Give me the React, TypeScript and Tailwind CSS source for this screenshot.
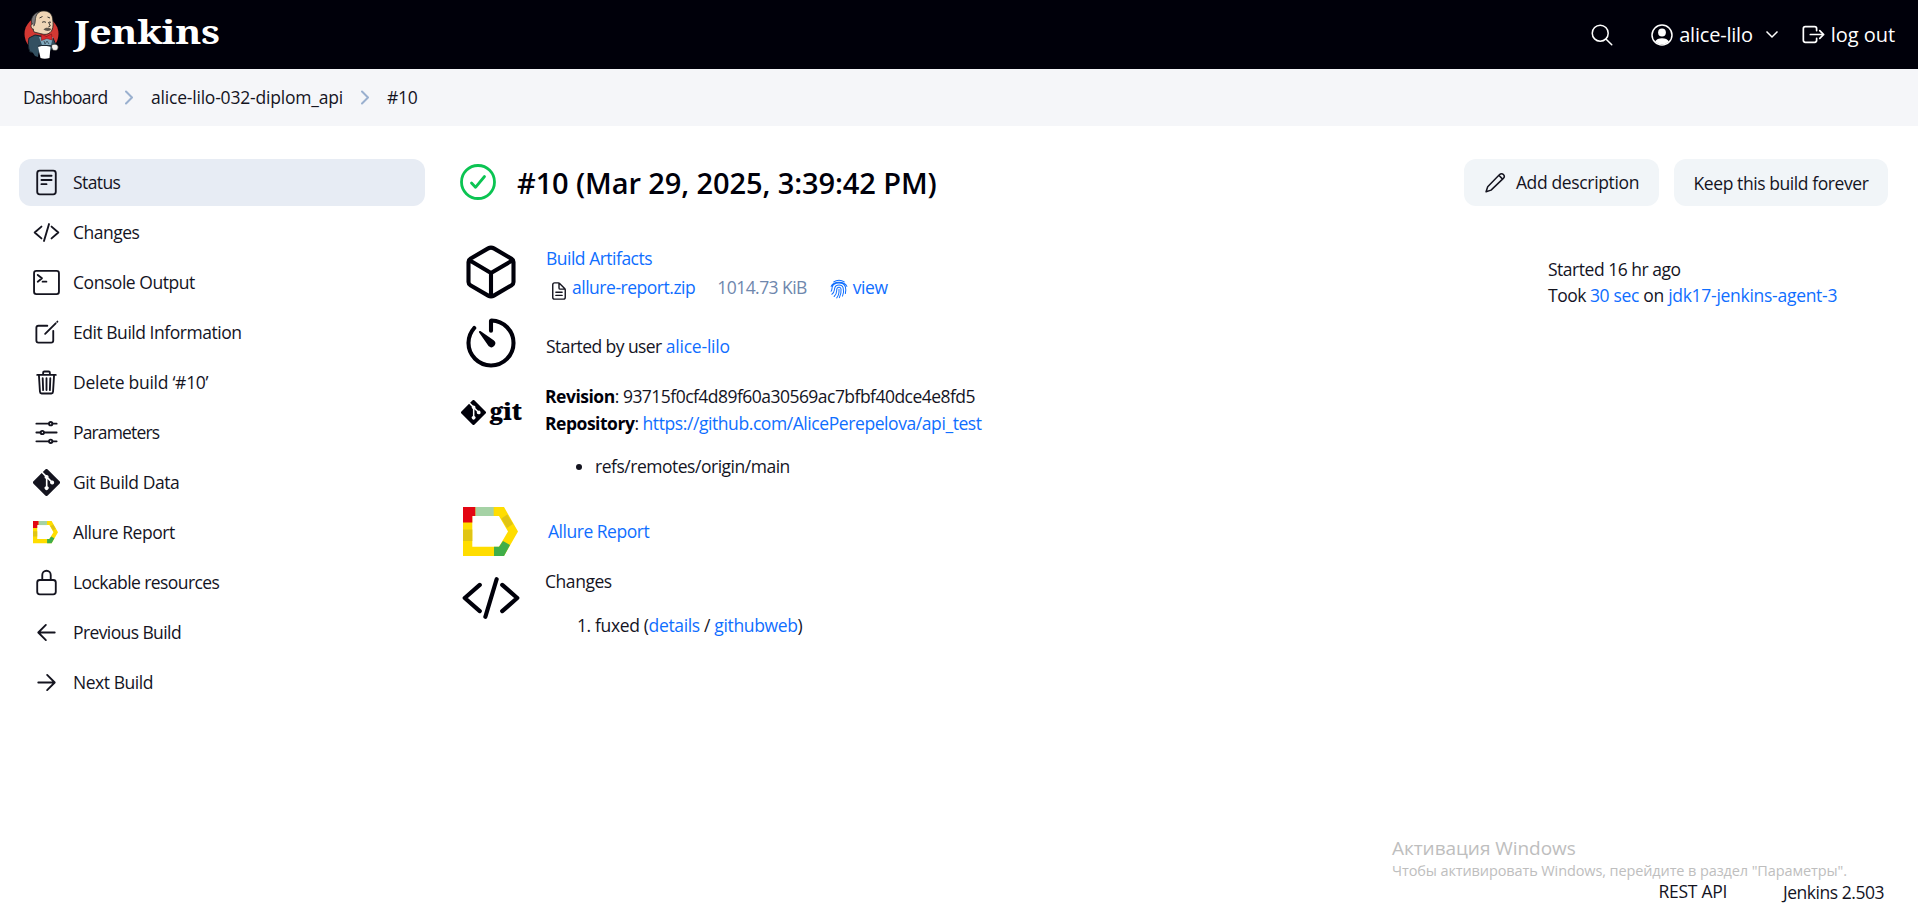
import React, { ReactNode } from "react";

function Svg({ size = 28, children, className = "", w = 35 }: { size?: number; children: ReactNode; className?: string; w?: number }) {
  return (
    <svg width={size} height={size} viewBox="0 0 512 512" fill="none" stroke="currentColor" strokeWidth={w} strokeLinecap="round" strokeLinejoin="round" className={"shrink-0 " + className}>
      {children}
    </svg>
  );
}

const Code = ({ size = 27 }: { size?: number }) => (
  <Svg size={size} w={36}><path d="M160 368L32 256l128-112M352 368l128-112-128-112M304 96l-96 320" /></Svg>
);

const gitPath = "M502.6 233.7L278.4 9.4a31.7 31.7 0 00-44.9 0l-46.5 46.6 59 59a37.7 37.7 0 0147.7 48l56.9 56.9a37.7 37.7 0 11-22.6 21.3l-53-53v139.5a37.7 37.7 0 11-31-1.1V185.800a37.7 37.7 0 01-20.500-49.500l-58.200-58.200L9.4 233.600a31.700 31.700 0 000 44.900l224.200 224.100a31.700 31.700 0 0044.900 0l224.100-224.100a31.700 31.700 0 000-44.800z";

const GitMark = ({ size = 27 }: { size?: number }) => (
  <svg width={size} height={size} viewBox="0 0 512 512" className="shrink-0"><path fill="currentColor" d={gitPath} /></svg>
);

const Allure = ({ size }: { size: number }) => (
  <svg width={size} height={(size * 49) / 55} viewBox="0 0 55 49" className="shrink-0">
    <path fill="#ffdd00" fillRule="evenodd" d="M0 0h41l14 24.500L41 49H0zM9.300 9v30.700H36L45 24.500 36 9z" />
    <path fill="#e30613" d="M0 0h12.500v9H9.300v6.600H0z" />
    <path fill="#a5d2a5" d="M12.500 0h18.200v9H12.500z" />
    <path fill="#e0c414" d="M0 22.500h9.300V34H0zM38.300 11.500L44.300 7.500 50 17l-6 4z" />
    <path fill="#3fae49" d="M31 39.700h5L40 34l7 4L41 49H31z" />
  </svg>
);

const FileIcon = () => (
  <Svg size={20} w={36}><path d="M416 221.250V416a48 48 0 01-48 48H144a48 48 0 01-48-48V96a48 48 0 0148-48h98.750a32 32 0 0122.620 9.370l141.260 141.260a32 32 0 019.370 22.620zM256 56v120a32 32 0 0032 32h120M176 288h160M176 368h160" /></Svg>
);

const Finger = () => (
  <svg width="18" height="20" viewBox="0 0 24 26" fill="none" stroke="currentColor" strokeWidth="1.350" strokeLinecap="round" className="mt-[2px] shrink-0">
    <path d="M5 3.500C9 .5 15 .5 19 3.500M1.500 9.500c3-7.500 18-7.500 21 0M1.500 16c1.500-2 1-4 1.500-6 2-6.500 15-7 17.500 0 .8 3 .8 6 0 9M2.500 20c4-2 3-6.500 4-9 1.500-4.500 9.500-4.500 11 .2 1 3.500.8 7.500-.8 11.300M5.500 23C10.500 19 8 14.500 9.500 12c1.500-2 4.800-1.500 5.200 1 .5 4-.2 7.500-2.200 11.500M9 24.800c3-3.500 3.300-7 3-11.300" />
  </svg>
);

const Butler = () => (
  <svg width="36" height="50" viewBox="0 0 36 50" className="shrink-0">
    <ellipse cx="17.500" cy="24" rx="17" ry="17.500" fill="#d33833" />
    <path d="M6 42C4 38 4 31 5 28l6-3 11 2 7 1 3 7-2 3-5 3-11 2z" fill="#335061" stroke="#16222b" strokeWidth="1" />
    <path d="M7 40l4 6 3 1 1-9-6-3z" fill="#335061" />
    <path d="M15 27l3 8 9 0 2-8z" fill="#81a8bc" />
    <path d="M20 31l1 3 2-3 2 3" fill="none" stroke="#33424c" strokeWidth=".8" />
    <path d="M10 22C8 18 8 13 9 9c2-6 7-8.500 12-8 5 .5 7.500 4 7.800 9 .4 3 .6 7-.8 10-2 4-6 5-10 4z" fill="#f0d6b7" stroke="#222" strokeWidth=".8" />
    <path d="M8.500 16C5.500 9 9 3 16 1.500c-3 2-4 4-4.500 7L11 13l-1 3z" fill="#7c7a7c" stroke="#222" strokeWidth=".7" />
    <path d="M9 14c-3-.5-2.500 5 1 5.500" fill="#f0d6b7" stroke="#222" strokeWidth=".8" />
    <path d="M15.500 8l3-1.500M23.500 7l2.500 1M18 12.500c1-1 3-1 4 0M25 12l2 .3M24.500 12l1.800 4-2 1" fill="none" stroke="#222" strokeWidth=".9" />
    <path d="M19.500 19.500c2-2.500 5-2 8-.5-1.500 2.500-5.500 2.500-8 .5z" fill="#5d554c" />
    <path d="M17 24l5.500 2.500L27.500 24l.8 6-5.500-1.500-5.300 2z" fill="#d9282c" stroke="#6d1512" strokeWidth=".5" />
    <path d="M14 36.500c4-1.300 8-.8 12.500 0L25.500 48c-3 1-6.500 1-9 0z" fill="#fff" />
    <path d="M14 36.300c5-1.500 9-1 14 0" fill="none" stroke="#16222b" strokeWidth="1" />
    <path d="M27.500 35.500c2-2 5.500-1.500 6.500.5.800 3-1 4.500-3 4.500-2.500 0-3.500-2-3.500-5z" fill="#f5f3f0" stroke="#222" strokeWidth=".7" />
  </svg>
);

const items: { label: string; icon: ReactNode; t: string }[] = [
  { label: "Status", t: "tracking-[-0.6px]", icon: <Svg size={27}><rect x="80" y="32" width="352" height="448" rx="48" /><path d="M160 128h192M160 208h192M160 288h96" /></Svg> },
  { label: "Changes", t: "tracking-[-0.5px]", icon: <Code /> },
  { label: "Console Output", t: "tracking-[-0.45px]", icon: <Svg size={27}><rect x="20" y="36" width="472" height="440" rx="44" /><path d="M90 112l80 64-80 64M182 240h72" /></Svg> },
  { label: "Edit Build Information", t: "tracking-[-0.47px]", icon: <Svg size={27}><path d="M384 224v184a40 40 0 01-40 40H104a40 40 0 01-40-40V168a40 40 0 0140-40h167.480M230 282L430 82M459 53l4-4" /></Svg> },
  { label: "Delete build ‘#10’", t: "tracking-[-0.27px]", icon: <Svg size={27}><path d="M112 112l20 320c.95 18.490 14.400 32 32 32h184c17.670 0 30.870-13.510 32-32l20-320M80 112h352M192 112V72a24 24 0 0124-24h80a24 24 0 0124 24v40M256 176v224M184 176l8 224M328 176l-8 224" /></Svg> },
  { label: "Parameters", t: "tracking-[-0.85px]", icon: <Svg size={27}><path d="M368 88h80M64 88h240M368 424h80M64 424h240M208 256h240M64 256h80" /><circle cx="336" cy="88" r="32" /><circle cx="176" cy="256" r="32" /><circle cx="336" cy="424" r="32" /></Svg> },
  { label: "Git Build Data", t: "tracking-[-0.43px]", icon: <GitMark /> },
  { label: "Allure Report", t: "tracking-[-0.43px]", icon: <Allure size={25} /> },
  { label: "Lockable resources", t: "tracking-[-0.58px]", icon: <Svg size={27}><path d="M336 208v-95a80 80 0 00-160 0v95" /><rect x="80" y="208" width="352" height="272" rx="48" /></Svg> },
  { label: "Previous Build", t: "tracking-[-0.6px]", icon: <Svg size={27}><path d="M244 400L100 256l144-144M120 256h292" /></Svg> },
  { label: "Next Build", t: "tracking-[-0.46px]", icon: <Svg size={27}><path d="M268 112l144 144-144 144M392 256H100" /></Svg> },
];

const Chevron = () => (
  <svg width="10" height="15" viewBox="0 0 10 15" fill="none" stroke="#9ab0cf" strokeWidth="2" strokeLinecap="round" strokeLinejoin="round"><path d="M1 1.500l6 6-6 6" /></svg>
);

const A = ({ children, className = "" }: { children: ReactNode; className?: string }) => (
  <a className={"text-[#0f6eff] " + className}>{children}</a>
);

export default function App() {
  return (
    <div className="relative flex h-[923px] w-[1918px] flex-col overflow-hidden bg-white font-['Open_Sans','Noto_Sans',sans-serif] text-[17.5px] tracking-[-0.3px] text-[#14141f] whitespace-nowrap">
      <header className="flex h-[69px] shrink-0 items-center bg-[#00000a] pr-[23px] pl-[24px] text-white">
        <Butler />
        <span className="mb-[5px] ml-[14px] origin-left scale-x-[1.19] font-['Noto_Serif','DejaVu_Serif','Liberation_Serif',serif] text-[33px] leading-[40px] font-bold">Jenkins</span>
        <Svg size={26} className="ml-auto" w={30}><path d="M221 64a157 157 0 10157 157A157 157 0 00221 64zM338 338l110 110" /></Svg>
        <svg width="22" height="22" viewBox="0 0 22 22" className="ml-[36px]"><circle cx="11" cy="11" r="10" fill="none" stroke="#fff" strokeWidth="1.500" /><circle cx="11" cy="8.500" r="3.900" fill="#fff" /><path d="M4 17.500c2-4.500 12-4.500 14 0a10 10 0 01-14 0z" fill="#fff" /></svg>
        <span className="ml-[6px] text-[20px] font-medium tracking-[-0.2px]">alice-lilo</span>
        <svg width="14" height="9" viewBox="0 0 14 9" fill="none" stroke="#fff" strokeWidth="1.500" className="ml-[12px]"><path d="M1.500 1.500L7 7l5.500-5.500" /></svg>
        <Svg size={25} className="ml-[22px]"><path d="M320 176v-40a40 40 0 00-40-40H88a40 40 0 00-40 40v240a40 40 0 0040 40h192a40 40 0 0040-40v-40M384 176l80 80-80 80M191 256h273" /></Svg>
        <span className="ml-[5px] text-[20px] font-medium tracking-[-0.05px]">log out</span>
      </header>

      <nav className="flex h-[57px] shrink-0 items-center bg-[#f5f6f9] pl-[23px]">
        <span className="w-[102px] tracking-[-0.65px]">Dashboard</span>
        <span className="w-[26px]"><Chevron /></span>
        <span className="w-[210px] tracking-[-0.2px]">alice-lilo-032-diplom_api</span>
        <span className="w-[26px]"><Chevron /></span>
        <span>#10</span>
      </nav>

      <div className="flex flex-1 pt-[33px] pl-[19px]">
        <aside className="flex w-[406px] flex-col gap-[3px]">
          {items.map((it, i) => (
            <div key={it.label} className={"flex h-[47px] items-center gap-[13px] rounded-[12px] pl-[14px] " + (i === 0 ? "bg-[#e7ecf4]" : "")}>
              <span className="flex w-[27px] shrink-0 items-center">{it.icon}</span>
              <span className={it.t}>{it.label}</span>
            </div>
          ))}
        </aside>

        <main className="ml-[35px] w-[1428px]">
          <div className="flex h-[47px] items-center">
            <svg width="36" height="36" viewBox="0 0 36 36" fill="none" stroke="#0bc452" strokeWidth="2.800" strokeLinecap="round" strokeLinejoin="round" className="mb-px"><circle cx="18" cy="18" r="16.500" /><path d="M11.500 19l4 4.300L24.500 12.500" /></svg>
            <h1 className="ml-[21px] text-[29px] font-semibold tracking-[-0.1px] text-[#00000a]">#10 (Mar 29, 2025, 3:39:42 PM)</h1>
            <button className="ml-auto flex h-[47px] w-[195px] items-center justify-center gap-[10px] rounded-[12px] bg-[#f1f5f8]">
              <Svg size={22}><path d="M364 58l-18 18-260 268-38 116 116-38L432 166l18-18a62 62 0 00-86-90zM346 76l86 90" /></Svg>
              <span className="tracking-[-0.35px]">Add description</span>
            </button>
            <button className="ml-[15px] h-[47px] w-[214px] rounded-[12px] bg-[#f1f5f8] pt-[2px] tracking-[-0.42px]">Keep this build forever</button>
          </div>

          <div className="flex tracking-[-0.48px]">
            <div className="flex w-[1088px] flex-col">
              <div className="mt-[36px] flex h-[70px]">
                <span className="w-[86px] pl-[1px] text-[#00000a]">
                  <Svg size={60} w={35}><path d="M448 341.370V170.610A32 32 0 00432.110 143l-152-88.460a47.940 47.940 0 00-48.240 0L79.890 143A32 32 0 0064 170.610v170.760A32 32 0 0079.890 369l152 88.460a48 48 0 0048.240 0l152-88.460A32 32 0 00448 341.370zM69 153.990l187 110 187-110M256 463.990v-200" /></Svg>
                </span>
                <div className="pt-[2px]">
                  <div className="h-[29px] leading-[29px] tracking-[-0.5px]"><A>Build Artifacts</A></div>
                  <div className="flex h-[29px] items-center leading-[29px]">
                    <span className="ml-[3px] pt-[7px]"><FileIcon /></span>
                    <A className="ml-[3px]">allure-report.zip</A>
                    <span className="ml-[22px] tracking-[-0.55px] text-[#6f87ad]">1014.73 KiB</span>
                    <A className="ml-[23px] flex items-center gap-[5px]"><Finger /><span>view</span></A>
                  </div>
                </div>
              </div>
              <div className="flex h-[71px]">
                <span className="w-[86px] pt-[1px] pl-[1px] text-[#00000a]">
                  <Svg size={60} w={35}><path d="M112.910 128A191.850 191.850 0 0064 254c-1.180 106.350 85.650 193.800 192 194 106.200.200 192-85.830 192-192 0-104.540-83.550-189.610-187.500-192a4.360 4.360 0 00-4.500 4.370V152" /><path stroke="none" fill="currentColor" d="M233.380 278.630l-79-113a8.130 8.130 0 0111.320-11.320l113 79a32.500 32.500 0 01-37.250 53.260 33.210 33.210 0 01-8.070-7.940z" /></Svg>
                </span>
                <div className="pt-[21px] leading-[26px] tracking-[-0.56px]">Started by user <A className="tracking-[-0.2px]">alice-lilo</A></div>
              </div>
              <div className="flex h-[123px]">
                <span className="flex h-[58px] w-[85px] items-center pl-[1px] text-[#00000a]">
                  <GitMark size={25} />
                  <span className="mb-[2px] ml-[4px] font-['Noto_Serif','DejaVu_Serif',serif] text-[23px] leading-[26px] font-black tracking-[-0.1px]">git</span>
                </span>
                <div className="leading-[27px]">
                  <div><b className="text-[#00000a]">Revision</b>: <span className="tracking-[-0.53px]">93715f0cf4d89f60a30569ac7bfbf40dce4e8fd5</span></div>
                  <div><b className="text-[#00000a]">Repository</b>: <A className="tracking-[-0.42px]">https://github.com/AlicePerepelova/api_test</A></div>
                  <ul className="mt-[16px] list-disc pl-[50px]"><li>refs/remotes/origin/main</li></ul>
                </div>
              </div>
              <div className="flex h-[61px]">
                <span className="w-[88px] pt-[1px] pl-[3px]"><Allure size={55} /></span>
                <A className="leading-[50px]">Allure Report</A>
              </div>
              <div className="flex">
                <span className="w-[85px] pt-[1px] pl-[1px] text-[#00000a]"><Code size={60} /></span>
                <div className="leading-[28px] tracking-[-0.35px]">
                  <div className="tracking-[-0.45px]">Changes</div>
                  <ol className="mt-[16px] list-decimal pl-[50px]"><li>fuxed (<A>details</A> / <A>githubweb</A>)</li></ol>
                </div>
              </div>
            </div>
            <div className="pt-[50px] leading-[26px]">
              <div>Started 16 hr ago</div>
              <div className="tracking-[-0.33px]"><span className="tracking-[-0.5px]">Took </span><A>30 sec</A> on <A className="tracking-[-0.28px]">jdk17-jenkins-agent-3</A></div>
            </div>
          </div>
        </main>
      </div>

      <footer className="flex h-[50px] shrink-0 justify-end pr-[34px] leading-[36px]">
        <span>REST API</span>
        <span className="ml-[56px] pt-px tracking-[-0.47px]">Jenkins 2.503</span>
      </footer>
      <div className="absolute top-[834px] left-[1392px] text-[#bebebe]">
        <div className="text-[19px] leading-[28px] tracking-[-0.05px]">Активация Windows</div>
        <div className="text-[14.5px] leading-[18px] tracking-[-0.11px]">Чтобы активировать Windows, перейдите в раздел "Параметры".</div>
      </div>
    </div>
  );
}
